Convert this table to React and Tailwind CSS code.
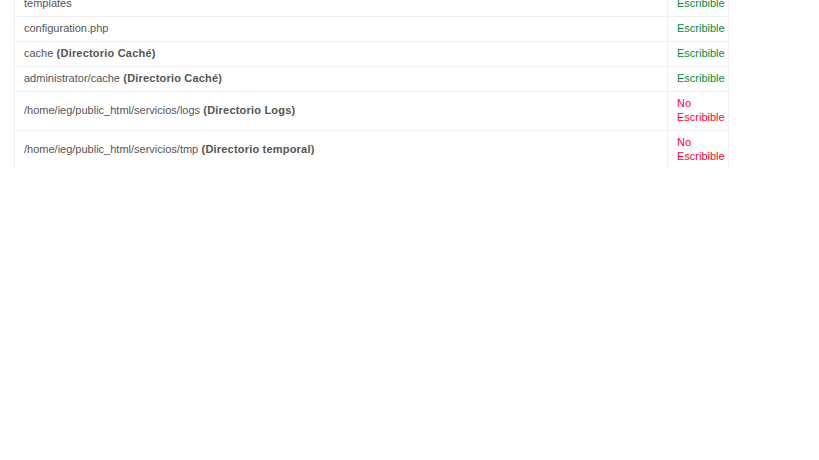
const rows = [
  { path: 'templates', ok: true },
  { path: 'configuration.php', ok: true },
  { path: 'cache', note: 'Directorio Caché', ok: true },
  { path: 'administrator/cache', note: 'Directorio Caché', ok: true },
  { path: '/home/ieg/public_html/servicios/logs', note: 'Directorio Logs', ok: false },
  { path: '/home/ieg/public_html/servicios/tmp', note: 'Directorio temporal', ok: false },
]

const App = () => {
  return (
    <div className="w-[819px] h-[460px] bg-white overflow-hidden font-['Liberation_Sans',Arial,sans-serif] text-[11px] leading-[14px] text-[#555]">
      {/* directory permissions table, scrolled so the first row is cut off */}
      <div className="ml-[14px] w-[715px] -mt-[8px] border-l border-r border-[#f0f0f0]">
        {rows.map((row, i) => (
          <div
            key={row.path}
            className={`flex ${i < rows.length - 1 ? 'border-b border-[#f0f0f0]' : ''}`}
          >
            <div className="flex-1 flex items-center pl-[9px] pt-[4px] pb-[6px]">
              <span>
                {row.path}
                {row.note && <b className="font-bold tracking-[0.2px]"> ({row.note})</b>}
              </span>
            </div>
            <div className="w-[61px] border-l border-[#f0f0f0] pl-[9px] pr-[1px] pt-[4px] pb-[6px]">
              {row.ok ? (
                <span className="text-[#008c3a]">Escribible</span>
              ) : (
                <span className="text-[#ff0033]">No Escribible</span>
              )}
            </div>
          </div>
        ))}
      </div>
    </div>
  )
}

export default App
